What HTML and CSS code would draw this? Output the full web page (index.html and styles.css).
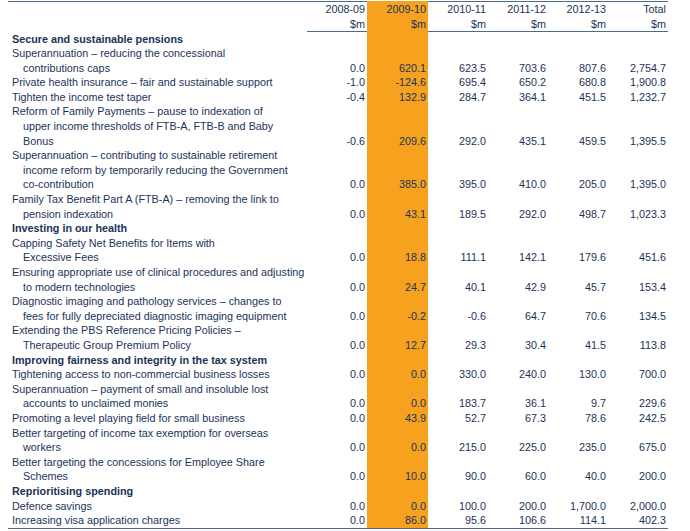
FILE: index.html
```html
<!DOCTYPE html>
<html lang="en">

<head>
    <title>Savings measures</title>
    <meta charset="utf-8">
    <link rel="stylesheet" href="styles.css">
</head>

<body>
<table class="measures">
    <colgroup>
        <col class="colLabel">
        <col class="colNum">
        <col class="colNum colHl">
        <col class="colNum">
        <col class="colNum">
        <col class="colNum">
        <col class="colNum">
    </colgroup>
    <thead>
    <tr class="headTop">
        <th class="label"></th>
        <th>2008-09</th>
        <th class="hl">2009-10</th>
        <th>2010-11</th>
        <th>2011-12</th>
        <th>2012-13</th>
        <th>Total</th>
    </tr>
    <tr class="headUnit">
        <th class="label"></th>
        <th>$m</th>
        <th class="hl">$m</th>
        <th>$m</th>
        <th>$m</th>
        <th>$m</th>
        <th>$m</th>
    </tr>
    </thead>
    <tbody>
    <tr class="section">
        <td class="label">Secure and sustainable pensions</td>
        <td></td><td class="hl"></td><td></td><td></td><td></td><td></td>
    </tr>
    <tr>
        <td class="label">Superannuation – reducing the concessional<br>contributions caps</td>
        <td>0.0</td><td class="hl">620.1</td><td>623.5</td><td>703.6</td><td>807.6</td><td>2,754.7</td>
    </tr>
    <tr>
        <td class="label">Private health insurance – fair and sustainable support</td>
        <td>-1.0</td><td class="hl">-124.6</td><td>695.4</td><td>650.2</td><td>680.8</td><td>1,900.8</td>
    </tr>
    <tr>
        <td class="label">Tighten the income test taper</td>
        <td>-0.4</td><td class="hl">132.9</td><td>284.7</td><td>364.1</td><td>451.5</td><td>1,232.7</td>
    </tr>
    <tr>
        <td class="label">Reform of Family Payments – pause to indexation of<br>upper income thresholds of FTB-A, FTB-B and Baby<br>Bonus</td>
        <td>-0.6</td><td class="hl">209.6</td><td>292.0</td><td>435.1</td><td>459.5</td><td>1,395.5</td>
    </tr>
    <tr>
        <td class="label">Superannuation – contributing to sustainable retirement<br>income reform by temporarily reducing the Government<br>co-contribution</td>
        <td>0.0</td><td class="hl">385.0</td><td>395.0</td><td>410.0</td><td>205.0</td><td>1,395.0</td>
    </tr>
    <tr>
        <td class="label">Family Tax Benefit Part A (FTB-A) – removing the link to<br>pension indexation</td>
        <td>0.0</td><td class="hl">43.1</td><td>189.5</td><td>292.0</td><td>498.7</td><td>1,023.3</td>
    </tr>
    <tr class="section">
        <td class="label">Investing in our health</td>
        <td></td><td class="hl"></td><td></td><td></td><td></td><td></td>
    </tr>
    <tr>
        <td class="label">Capping Safety Net Benefits for Items with<br>Excessive Fees</td>
        <td>0.0</td><td class="hl">18.8</td><td>111.1</td><td>142.1</td><td>179.6</td><td>451.6</td>
    </tr>
    <tr>
        <td class="label">Ensuring appropriate use of clinical procedures and adjusting<br>to modern technologies</td>
        <td>0.0</td><td class="hl">24.7</td><td>40.1</td><td>42.9</td><td>45.7</td><td>153.4</td>
    </tr>
    <tr>
        <td class="label">Diagnostic imaging and pathology services – changes to<br>fees for fully depreciated diagnostic imaging equipment</td>
        <td>0.0</td><td class="hl">-0.2</td><td>-0.6</td><td>64.7</td><td>70.6</td><td>134.5</td>
    </tr>
    <tr>
        <td class="label">Extending the PBS Reference Pricing Policies –<br>Therapeutic Group Premium Policy</td>
        <td>0.0</td><td class="hl">12.7</td><td>29.3</td><td>30.4</td><td>41.5</td><td>113.8</td>
    </tr>
    <tr class="section">
        <td class="label">Improving fairness and integrity in the tax system</td>
        <td></td><td class="hl"></td><td></td><td></td><td></td><td></td>
    </tr>
    <tr>
        <td class="label">Tightening access to non-commercial business losses</td>
        <td>0.0</td><td class="hl">0.0</td><td>330.0</td><td>240.0</td><td>130.0</td><td>700.0</td>
    </tr>
    <tr>
        <td class="label">Superannuation – payment of small and insoluble lost<br>accounts to unclaimed monies</td>
        <td>0.0</td><td class="hl">0.0</td><td>183.7</td><td>36.1</td><td>9.7</td><td>229.6</td>
    </tr>
    <tr>
        <td class="label">Promoting a level playing field for small business</td>
        <td>0.0</td><td class="hl">43.9</td><td>52.7</td><td>67.3</td><td>78.6</td><td>242.5</td>
    </tr>
    <tr>
        <td class="label">Better targeting of income tax exemption for overseas<br>workers</td>
        <td>0.0</td><td class="hl">0.0</td><td>215.0</td><td>225.0</td><td>235.0</td><td>675.0</td>
    </tr>
    <tr>
        <td class="label">Better targeting the concessions for Employee Share<br>Schemes</td>
        <td>0.0</td><td class="hl">10.0</td><td>90.0</td><td>60.0</td><td>40.0</td><td>200.0</td>
    </tr>
    <tr class="section">
        <td class="label">Reprioritising spending</td>
        <td></td><td class="hl"></td><td></td><td></td><td></td><td></td>
    </tr>
    <tr>
        <td class="label">Defence savings</td>
        <td>0.0</td><td class="hl">0.0</td><td>100.0</td><td>200.0</td><td>1,700.0</td><td>2,000.0</td>
    </tr>
    <tr class="lastRow">
        <td class="label">Increasing visa application charges</td>
        <td>0.0</td><td class="hl">86.0</td><td>95.6</td><td>106.6</td><td>114.1</td><td>402.3</td>
    </tr>
    </tbody>
</table>
</body>

</html>
```

FILE: styles.css
```css
html {
    background-color: #ffffff;
}

body {
    margin: 1px 0 0 8px;
    font-family: 'Liberation Sans', Arial, sans-serif;
    font-size: 10.8px;
    color: #1a3358;
}

.measures {
    border-collapse: collapse;
    table-layout: fixed;
    width: 660px;
    font-size: 10.8px;
}

.colLabel {
    width: 299px;
}

.colNum {
    width: 60px;
}

.colHl {
    width: 61px;
    background: #f6a21e;
}

.measures th,
.measures td {
    padding: 0 2px 0 0;
    text-align: right;
    vertical-align: bottom;
    font-weight: normal;
    white-space: nowrap;
}

.measures thead th {
    line-height: 14.5px;
}

.measures tbody td {
    line-height: 14.6px;
}

.measures .label {
    text-align: left;
    padding: 0 0 0 15px;
    text-indent: -11px;
}

.headTop th {
    border-top: 1px solid #4d6a8c;
}

.headUnit th {
    border-bottom: 1px solid #4d6a8c;
}

.headUnit th.label {
    border-bottom: none;
}

.section td {
    font-weight: bold;
}

.lastRow td {
    border-bottom: 1px solid #4d6a8c;
}

.headTop th.hl,
.headUnit th.hl {
    border-color: #f6a21e;
}
```
